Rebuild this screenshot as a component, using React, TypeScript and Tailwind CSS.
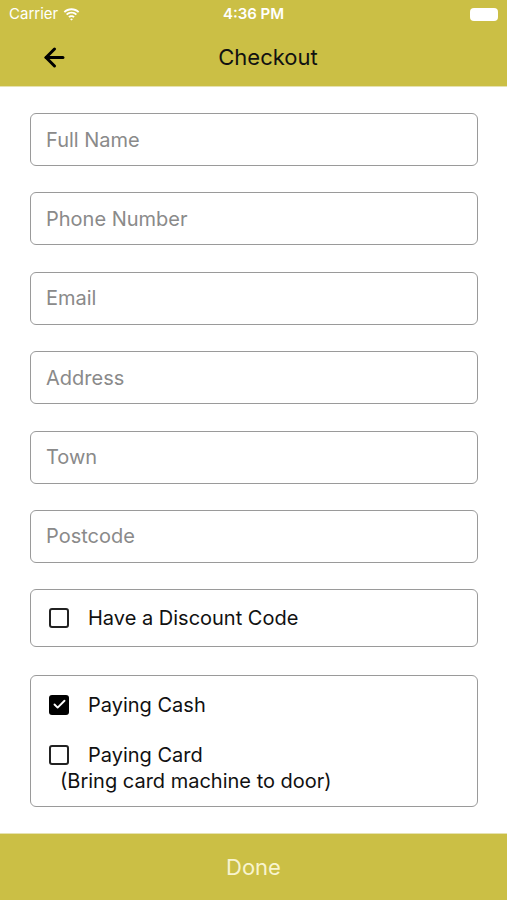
import React from 'react';
import { ArrowLeft, Check } from 'lucide-react';

const fields = ['Full Name', 'Phone Number', 'Email', 'Address', 'Town', 'Postcode'];

const Box = ({ checked }: { checked?: boolean }) =>
  checked ? (
    <div className="w-[20px] h-[20px] rounded-[3px] bg-black flex items-center justify-center shrink-0">
      <Check className="w-[15px] h-[15px] text-white" strokeWidth={3} />
    </div>
  ) : (
    <div className="w-[20px] h-[20px] rounded-[3px] border-2 border-[#222] shrink-0"></div>
  );

const App = () => {
  return (
    <div className="w-[507px] h-[900px] bg-white flex flex-col font-['Inter','Liberation_Sans',sans-serif] overflow-hidden">
      {/* header */}
      <div className="bg-[#cbbf45] h-[87px] flex flex-col border-b border-[#e6e2b0]">
        <div className="h-[28px] flex items-center justify-between px-[9px] text-white text-[15px]">
          <div className="flex items-center gap-[5px] w-[100px]">
            <span>Carrier</span>
            <svg width="17" height="13" viewBox="0 0 17 13" fill="white">
              <path d="M8.5 2.2c2.5 0 4.8 1 6.5 2.6l1.3-1.3C14.3 1.5 11.5.3 8.5.3S2.7 1.5.7 3.5L2 4.8C3.7 3.2 6 2.2 8.5 2.2z" />
              <path d="M8.5 5.6c1.6 0 3.1.6 4.2 1.7l1.3-1.3C12.6 4.6 10.6 3.7 8.5 3.7S4.4 4.6 3 6l1.3 1.3c1.1-1.1 2.6-1.7 4.2-1.7z" />
              <path d="M8.5 9c.7 0 1.4.3 1.9.8l1.3-1.3c-.8-.8-2-1.3-3.2-1.3s-2.4.5-3.2 1.3l1.3 1.3c.5-.5 1.2-.8 1.9-.8zM8.5 12.6l1.4-1.4c-.4-.4-.9-.6-1.4-.6s-1 .2-1.4.6z" />
            </svg>
          </div>
          <span className="font-semibold">4:36 PM</span>
          <div className="w-[100px] flex justify-end">
            <div className="w-[28px] h-[13px] rounded-[4px] bg-white"></div>
          </div>
        </div>
        <div className="flex-1 flex items-center pl-[40px] pr-[40px]">
          <ArrowLeft className="w-[29px] h-[29px] text-black" strokeWidth={2.5} />
          <div className="flex-1 text-center text-[22px] text-[#111]">Checkout</div>
        </div>
      </div>

      {/* form */}
      <div className="flex-1 flex flex-col pl-[30px] pr-[29px] pt-[26px] text-[20px]">
        <div className="flex flex-col gap-[26.4px]">
          {fields.map((f) => (
            <div
              key={f}
              className="h-[53px] border border-[#9a9a9a] rounded-[6px] flex items-center px-[15px] text-[#8a8a8a]"
            >
              {f}
            </div>
          ))}
          <div className="h-[58px] border border-[#9a9a9a] rounded-[6px] flex items-center gap-[19px] px-[18px] text-[#111]">
            <Box />
            <span>Have a Discount Code</span>
          </div>
        </div>
        <div className="mt-[28px] h-[132px] border border-[#9a9a9a] rounded-[6px] flex flex-col px-[18px] pt-[16px] text-[#111]">
          <div className="flex items-center gap-[19px] h-[25px]">
            <Box checked />
            <span>Paying Cash</span>
          </div>
          <div className="flex items-center gap-[19px] h-[25px] mt-[25px]">
            <Box />
            <span>Paying Card</span>
          </div>
          <div className="pl-[11px] h-[28px] flex items-center">(Bring card machine to door)</div>
        </div>
      </div>

      {/* done */}
      <div className="h-[67px] bg-[#cbbf45] border-t border-[#e6e2b0] flex items-center justify-center text-[22px] text-[#f8f4cf]">
        Done
      </div>
    </div>
  );
};

export default App;
